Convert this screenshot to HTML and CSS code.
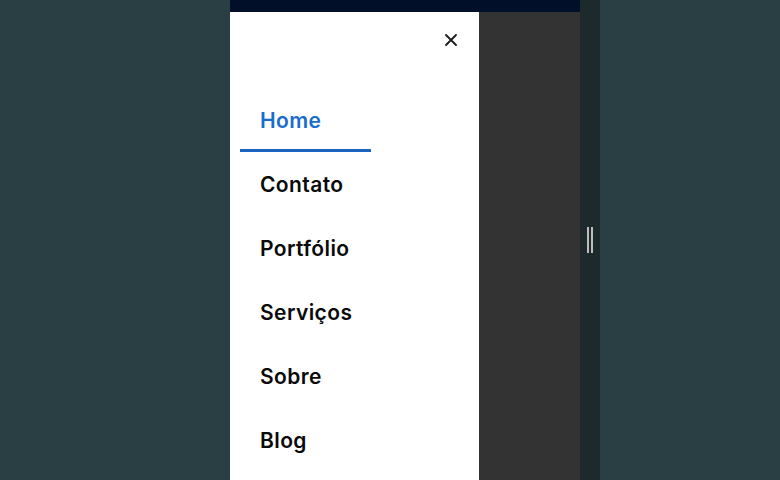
FILE: index.html
```html
<!DOCTYPE html>
<html lang="pt-BR">
<head>
    <meta charset="UTF-8">
    <meta name="viewport" content="width=device-width, initial-scale=1.0">
    <title>Menu</title>
    <link rel="stylesheet" href="styles.css">
</head>
<body>

    <!-- Phone preview -->
    <div class="frame">
        <div class="topbar"></div>
        <div class="screen">

            <!-- Drawer -->
            <nav class="drawer">
                <button class="close" aria-label="Fechar">
                    <svg width="12" height="12" viewBox="0 0 12 12">
                        <path d="M1 1 L11 11 M11 1 L1 11" stroke="#1a1a1a" stroke-width="1.8" stroke-linecap="round"/>
                    </svg>
                </button>
                <ul class="menu">
                    <li><a href="#" class="active">Home</a></li>
                    <li><a href="#">Contato</a></li>
                    <li><a href="#">Portfólio</a></li>
                    <li><a href="#">Serviços</a></li>
                    <li><a href="#">Sobre</a></li>
                    <li><a href="#">Blog</a></li>
                </ul>
            </nav>

            <div class="overlay"></div>
        </div>
    </div>

    <!-- Resize handle -->
    <div class="gutter">
        <span class="grip"></span>
    </div>

</body>
</html>
```

FILE: styles.css
```css
body {
    margin: 0;
    padding: 0;
    height: 480px;
    overflow: hidden;
    background-color: #293f44;
    font-family: "Inter", "Liberation Sans", sans-serif;
    display: flex;
    padding-left: 230px;
    box-sizing: border-box;
}
.frame {
    width: 350px;
    height: 480px;
    display: flex;
    flex-direction: column;
}
.topbar {
    height: 12px;
    background-color: #020f29;
}
.screen {
    flex: 1;
    display: flex;
}
.drawer {
    width: 249px;
    background-color: #fff;
    position: relative;
    padding-top: 76px;
}
.overlay {
    flex: 1;
    background-color: #333;
}
.close {
    position: absolute;
    top: 16px;
    right: 16px;
    width: 24px;
    height: 24px;
    border: none;
    background: none;
    padding: 0;
    display: flex;
    align-items: center;
    justify-content: center;
    cursor: pointer;
}
.menu {
    list-style: none;
    margin: 0;
    padding: 0;
}
.menu a {
    display: flex;
    align-items: center;
    height: 64px;
    box-sizing: border-box;
    padding-left: 30px;
    font-size: 21px;
    font-weight: 600;
    letter-spacing: 0.4px;
    color: #0a0a0a;
    text-decoration: none;
}
.menu a.active {
    color: #1a6ccc;
    margin-left: 10px;
    padding-left: 20px;
    width: 131px;
    border-bottom: 3px solid #1a64c0;
    padding-top: 3px;
}
.gutter {
    width: 20px;
    height: 480px;
    background-color: #1d2a2c;
    display: flex;
    align-items: center;
    justify-content: center;
}
.grip {
    width: 2px;
    height: 26px;
    border-left: 2px solid #bdbdbd;
    border-right: 2px solid #bdbdbd;
}
```
